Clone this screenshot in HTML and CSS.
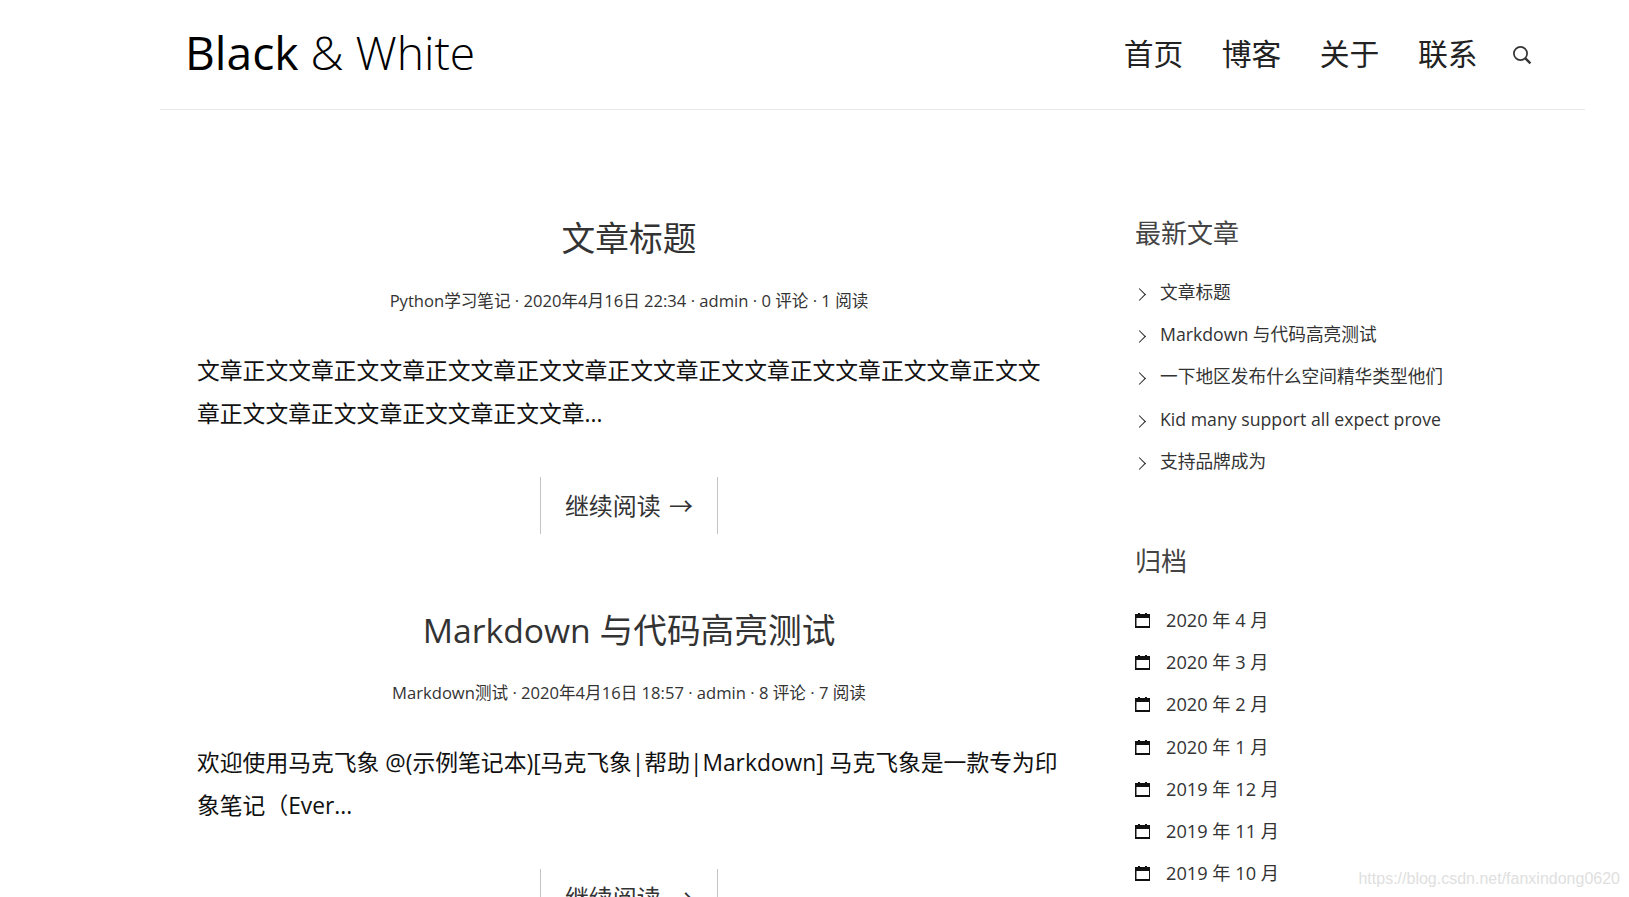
FILE: index.html
```html
<!DOCTYPE html>
<html lang="zh-CN">

<head>
    <meta charset="UTF-8">
    <title>Black &amp; White</title>
    <link rel="stylesheet" href="styles.css">
</head>

<body>
    <header class="site-header">
        <a class="logo" href="#"><b>Black</b> &amp; White</a>
        <nav class="main-nav">
            <a href="#">首页</a>
            <a href="#">博客</a>
            <a href="#">关于</a>
            <a href="#">联系</a>
            <svg class="search-icon" viewBox="0 0 20 20" width="20" height="20" aria-label="搜索">
                <circle cx="8.5" cy="8.5" r="6.6" fill="none" stroke="#333" stroke-width="1.7"/>
                <path d="M13.4 13.4 L18.4 18.4" fill="none" stroke="#333" stroke-width="2.4"/>
            </svg>
        </nav>
    </header>

    <div class="page">
        <main class="post-list">
            <article class="post">
                <h2 class="post-title">文章标题</h2>
                <div class="post-meta">Python学习笔记 · 2020年4月16日 22:34 · admin · 0 评论 · 1 阅读</div>
                <p class="post-excerpt">文章正文文章正文文章正文文章正文文章正文文章正文文章正文文章正文文章正文文章正文文章正文文章正文文章正文文章...</p>
                <div class="more-wrap"><a class="more-link" href="#">继续阅读 <span class="arrow">→</span></a></div>
            </article>
            <article class="post">
                <h2 class="post-title">Markdown 与代码高亮测试</h2>
                <div class="post-meta">Markdown测试 · 2020年4月16日 18:57 · admin · 8 评论 · 7 阅读</div>
                <p class="post-excerpt">欢迎使用马克飞象 @(示例笔记本)[马克飞象|帮助|Markdown] 马克飞象是一款专为印象笔记（Ever...</p>
                <div class="more-wrap"><a class="more-link" href="#">继续阅读 <span class="arrow">→</span></a></div>
            </article>
        </main>

        <aside class="sidebar">
            <section class="widget">
                <h3 class="widget-title">最新文章</h3>
                <ul class="recent-list">
                    <li><a href="#">文章标题</a></li>
                    <li><a href="#">Markdown 与代码高亮测试</a></li>
                    <li><a href="#">一下地区发布什么空间精华类型他们</a></li>
                    <li><a href="#">Kid many support all expect prove</a></li>
                    <li><a href="#">支持品牌成为</a></li>
                </ul>
            </section>
            <section class="widget">
                <h3 class="widget-title">归档</h3>
                <ul class="archive-list">
                    <li><a href="#">2020 年 4 月</a></li>
                    <li><a href="#">2020 年 3 月</a></li>
                    <li><a href="#">2020 年 2 月</a></li>
                    <li><a href="#">2020 年 1 月</a></li>
                    <li><a href="#">2019 年 12 月</a></li>
                    <li><a href="#">2019 年 11 月</a></li>
                    <li><a href="#">2019 年 10 月</a></li>
                </ul>
            </section>
        </aside>
    </div>

    <div class="watermark">https://blog.csdn.net/fanxindong0620</div>
</body>

</html>
```

FILE: styles.css
```css
html, body {
    height: 100%;
}

body {
    margin: 0;
    overflow: hidden;
    background: #fff;
    color: #333;
    font-family: "Open Sans", "Noto Sans CJK SC", sans-serif;
    position: relative;
}

a {
    color: inherit;
    text-decoration: none;
}

ul {
    list-style: none;
    margin: 0;
    padding: 0;
}

/* 顶部导航 */
.site-header {
    margin: 0 44px 0 160px;
    height: 104px;
    padding: 0 53px 5px 25px;
    border-bottom: 1px solid #e8e8e8;
    display: flex;
    align-items: center;
    justify-content: space-between;
}

.logo {
    font-size: 46.2px;
    font-weight: 300;
    color: #000;
}

.logo b {
    font-weight: 400;
}

.main-nav {
    display: flex;
    align-items: center;
    gap: 38.5px;
    font-size: 29.8px;
    font-weight: 400;
    color: #222;
}

.search-icon {
    margin-left: -4px;
    margin-top: 5px;
}

/* 主体 */
.page {
    display: flex;
    padding: 102px 0 0 197px;
}

.post-list {
    width: 864px;
    flex-shrink: 0;
    padding-top: 2px;
}

.post {
    margin-bottom: 72px;
}

.post-title {
    margin: 0;
    text-align: center;
    font-size: 33.7px;
    font-weight: 400;
    line-height: 48px;
    color: #333;
}

.post-meta {
    margin-top: 26px;
    text-align: center;
    font-size: 16.6px;
    line-height: 26px;
    color: #333;
}

.post-excerpt {
    margin: 35px 0 0;
    font-size: 22.8px;
    line-height: 43px;
    color: #111;
}

.more-wrap {
    margin-top: 42px;
    text-align: center;
}

.more-link {
    display: inline-block;
    padding: 0 24px;
    height: 57px;
    line-height: 57px;
    font-size: 24px;
    color: #333;
    border-left: 1px solid #c4c4c4;
    border-right: 1px solid #c4c4c4;
}

.arrow {
    margin-left: 2px;
}

/* 侧边栏 */
.sidebar {
    margin-left: 74px;
    width: 420px;
    padding-top: 1px;
}

.widget {
    margin-bottom: 59px;
}

.widget-title {
    margin: 0 0 18px;
    font-size: 26px;
    font-weight: 400;
    line-height: 40px;
    color: #444;
}

.recent-list li,
.archive-list li {
    height: 42.2px;
    line-height: 42.2px;
    color: #333;
    display: flex;
    align-items: center;
}

.recent-list li {
    font-size: 17.7px;
}

.archive-list li {
    font-size: 18.2px;
}

.recent-list li::before {
    content: "";
    width: 8px;
    height: 8px;
    margin: 5px 16px 0 0;
    border-top: 1.5px solid #222;
    border-right: 1.5px solid #222;
    transform: rotate(45deg);
    flex-shrink: 0;
}

/* 日历图标：顶部两个小齿 + 黑色页眉 + 边框 */
.archive-list li::before {
    content: "";
    width: 15px;
    height: 15px;
    margin: 1px 16px 0 0;
    flex-shrink: 0;
    background:
        linear-gradient(#111, #111) 3px 0 / 2px 2px no-repeat,
        linear-gradient(#111, #111) 10px 0 / 2px 2px no-repeat,
        linear-gradient(#111, #111) 0 1px / 100% 4px no-repeat,
        linear-gradient(#111, #111) 0 100% / 100% 2px no-repeat,
        linear-gradient(#111, #111) 0 1px / 1.5px 14px no-repeat,
        linear-gradient(#111, #111) 100% 1px / 1.5px 14px no-repeat;
}

/* 水印 */
.watermark {
    position: absolute;
    right: 9px;
    bottom: 9px;
    font-family: "Liberation Sans", sans-serif;
    font-size: 16px;
    color: #e0e0e0;
}
```
